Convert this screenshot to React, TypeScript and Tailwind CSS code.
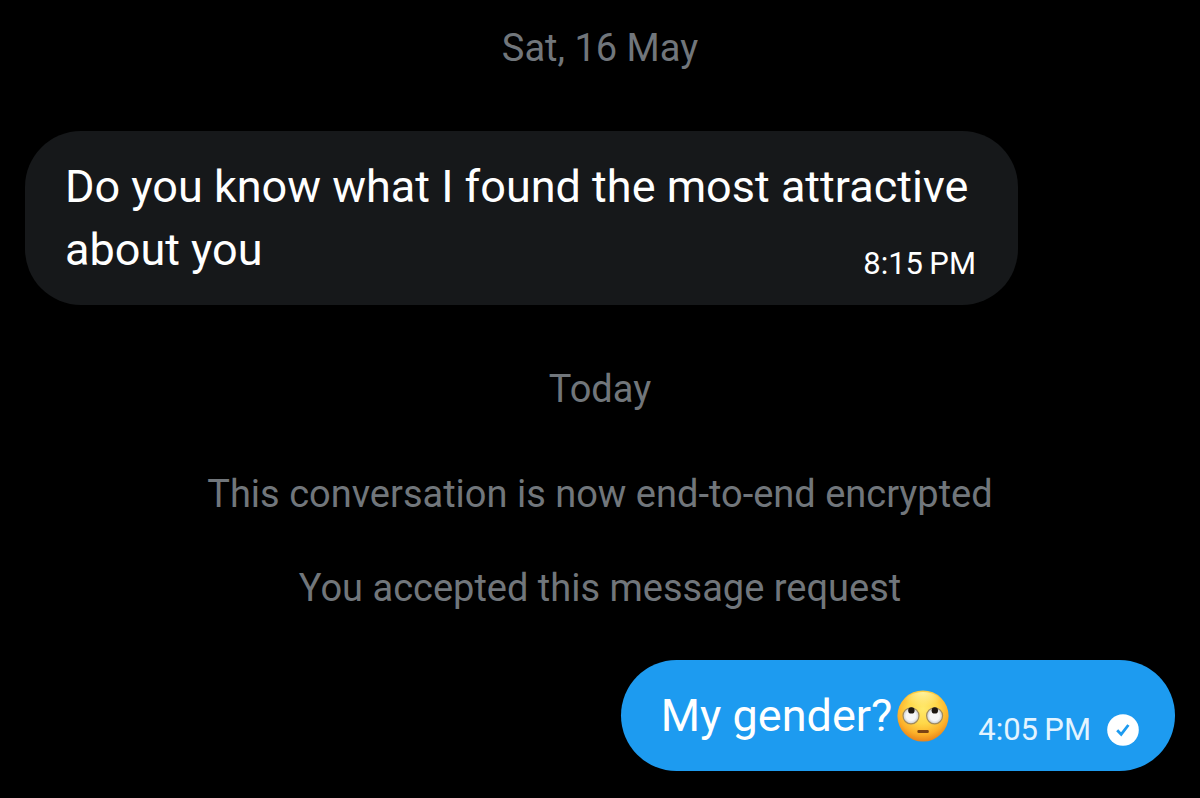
import type { ReactNode } from 'react';

function Notice({ children, className }: { children: ReactNode; className: string }) {
  return (
    <p className={`text-center text-[38px] leading-[48px] text-[#71767b] ${className}`}>{children}</p>
  );
}

function EyeRoll() {
  return (
    <svg role="img" aria-label="Face with rolling eyes" viewBox="0 0 54 54" className="size-[54px] shrink-0">
      <defs>
        <radialGradient id="face" cx="50%" cy="36%" r="64%">
          <stop offset="0" stopColor="#ffe96b" />
          <stop offset="0.45" stopColor="#ffd748" />
          <stop offset="0.78" stopColor="#fcb029" />
          <stop offset="1" stopColor="#e8831a" />
        </radialGradient>
        <radialGradient id="shine" cx="50%" cy="0%" r="60%">
          <stop offset="0" stopColor="#fff3a0" />
          <stop offset="1" stopColor="#fff3a0" stopOpacity="0" />
        </radialGradient>
        <radialGradient id="eye" cx="50%" cy="50%" r="50%">
          <stop offset="0.6" stopColor="#f6f6f6" />
          <stop offset="1" stopColor="#c6cacd" />
        </radialGradient>
      </defs>
      <circle cx="27" cy="27" r="25.6" fill="url(#face)" />
      <ellipse cx="27" cy="15" rx="19" ry="12" fill="url(#shine)" />
      <circle cx="15" cy="26.8" r="8" fill="url(#eye)" stroke="#a08a5c" strokeWidth="1.2" />
      <circle cx="38.6" cy="26.8" r="8" fill="url(#eye)" stroke="#a08a5c" strokeWidth="1.2" />
      <circle cx="15.4" cy="21.4" r="3.2" fill="#1e1812" />
      <circle cx="38.8" cy="21.4" r="3.2" fill="#1e1812" />
      <rect x="21.4" y="41" width="11.4" height="3" rx="1.2" fill="#7b4213" />
    </svg>
  );
}

function Sent() {
  return (
    <svg role="img" aria-label="Sent" viewBox="0 0 32 32" className="size-8 shrink-0">
      <circle cx="16" cy="16" r="15.8" fill="#fff" />
      <path d="M10.2 16.2l4 4.2 7.2-9.4" fill="none" stroke="#1d9bf0" strokeWidth="2.8" />
    </svg>
  );
}

export default function App() {
  return (
    <main className="flex min-h-screen flex-col bg-black px-[25px] pt-6 pb-[27px] font-['Roboto',sans-serif]">
      <Notice className="mb-[59px]">Sat, 16 May</Notice>

      <div className="flex max-w-[993px] items-end justify-between rounded-[56px] bg-[#16181a] py-6 pr-[42px] pl-10 text-white">
        <p className="text-[45px] leading-[63px]">
          Do you know what I found the most attractive
          <br />
          about you
        </p>
        <time className="-ml-40 shrink-0 text-[31px] leading-[34px]">8:15&#8201;PM</time>
      </div>

      <Notice className="mt-[60px]">Today</Notice>
      <Notice className="mt-[57px]">This conversation is now end-to-end encrypted</Notice>
      <Notice className="mt-[46px] mb-12">You accepted this message request</Notice>

      <div className="flex items-end self-end rounded-[56px] bg-[#1d9bf0] py-6 pr-9 pl-10 text-white">
        <p className="flex items-center gap-1 text-[45px] leading-[63px]">
          My gender?
          <EyeRoll />
        </p>
        <div className="ml-7 flex items-center gap-4">
          <time className="text-[31px] leading-[34px] text-[#e3f4ff]">4:05&#8201;PM</time>
          <Sent />
        </div>
      </div>
    </main>
  );
}
